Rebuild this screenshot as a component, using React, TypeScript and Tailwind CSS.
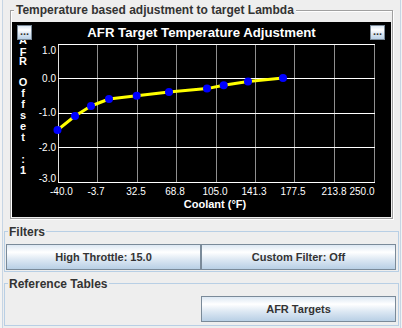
import React from "react";

const FONT = { fontFamily: '"Liberation Sans", Arial, sans-serif' };
const SVG_FONT = "'Liberation Sans', Arial, sans-serif";

function DotsButton({ className }: { className: string }) {
  return (
    <div
      className={`absolute w-[15px] h-[15px] border border-[#7a8a99] bg-[linear-gradient(to_bottom,#dde8f3_0%,#ffffff_30%,#dde8f3_60%,#b8cfe5_100%)] overflow-hidden ${className}`}
    >
      <span className="absolute left-[2px] top-[-1px] text-[11px] leading-[13px] font-bold text-[#333333]">
        ...
      </span>
    </div>
  );
}

function Btn({ children }: { children: React.ReactNode }) {
  return (
    <div className="h-[26px] flex items-center justify-center border border-[#7a8a99] bg-[linear-gradient(to_bottom,#dde8f3_0%,#ffffff_30%,#dde8f3_60%,#b8cfe5_100%)] text-[11px] leading-[13px] font-bold text-[#333333]">
      {children}
    </div>
  );
}

const gx = [46, 85, 125, 164, 204, 243, 282, 322, 362];
const gy = [22, 56, 91, 125, 160];
const pts: [number, number][] = [
  [45.5, 108],
  [63, 94],
  [79, 84],
  [97, 77],
  [124.7, 73.7],
  [157, 70],
  [195, 66.6],
  [211.7, 63.2],
  [236, 59.6],
  [271, 56],
];
const yLabels: [string, number][] = [
  ["1.0", 32],
  ["0.0", 60],
  ["-1.0", 94],
  ["-2.0", 129],
  ["-3.0", 160],
];
const xLabels = ["-40.0", "-3.7", "32.5", "68.8", "105.0", "141.3", "177.5", "213.8", "250.0"];
const vChars: [string, number][] = [
  ["A", 21.5],
  ["F", 34],
  ["R", 43],
  ["O", 64],
  ["f", 75],
  ["f", 85.5],
  ["s", 97],
  ["e", 108],
  ["t", 119],
  [":", 141],
  ["1", 152],
];

function Chart() {
  return (
    <div className="relative w-[379px] h-[195px] bg-black">
      <svg width={379} height={195} className="absolute left-0 top-0" fontFamily={SVG_FONT}>
        {gx.map((x) => (
          <line key={`v${x}`} x1={x + 0.5} x2={x + 0.5} y1={22} y2={161} stroke="#8f8f8f" strokeWidth={1} />
        ))}
        <line x1={46.5} x2={46.5} y1={22} y2={161} stroke="#e0e0e0" strokeWidth={1} />
        {gy.map((y) => (
          <line key={`h${y}`} x1={46} x2={363} y1={y + 0.5} y2={y + 0.5} stroke="#ffffff" strokeWidth={1} />
        ))}
        <polyline
          points={pts.map(([x, y]) => `${x},${y}`).join(" ")}
          fill="none"
          stroke="#ffff00"
          strokeWidth={3}
          strokeLinejoin="round"
        />
        {pts.map(([x, y], i) => (
          <circle key={i} cx={x} cy={y} r={4} fill="#0000ff" />
        ))}
        <text x={189.5} y={15} textAnchor="middle" fill="#ffffff" fontSize={13.2} fontWeight="bold">
          AFR Target Temperature Adjustment
        </text>
        {yLabels.map(([t, y]) => (
          <text key={t} x={44} y={y} textAnchor="end" fill="#ffffff" fontSize={10}>
            {t}
          </text>
        ))}
        {xLabels.map((t, i) => {
          if (i === 0)
            return (
              <text key={t} x={38} y={173} textAnchor="start" fill="#ffffff" fontSize={10}>
                {t}
              </text>
            );
          if (i === xLabels.length - 1)
            return (
              <text key={t} x={362.5} y={173} textAnchor="end" fill="#ffffff" fontSize={10}>
                {t}
              </text>
            );
          return (
            <text key={t} x={i === 7 ? gx[i] : gx[i] - 1} y={173} textAnchor="middle" fill="#ffffff" fontSize={10}>
              {t}
            </text>
          );
        })}
        <text x={203} y={186} textAnchor="middle" fill="#ffffff" fontSize={11} fontWeight="bold">
          Coolant (°F)
        </text>
        <text fill="#ffffff" fontSize={11} fontWeight="bold" textAnchor="middle">
          {vChars.map(([c, y], i) => (
            <tspan key={i} x={11} y={y}>
              {c}
            </tspan>
          ))}
        </text>
      </svg>
      <DotsButton className="left-[5px] top-[3px]" />
      <DotsButton className="left-[358px] top-[3px]" />
    </div>
  );
}

export default function App() {
  return (
    <div className="w-[402px] h-[328px] bg-[#f3f3f3] pl-[2px] pr-[1px] overflow-hidden" style={FONT}>
      <div className="h-full border-x border-[#c6d5e4] bg-[#eeeeee] flex flex-col">
        <div className="relative mt-[10px] ml-[7px] w-[383px] h-[209px] shrink-0 border border-[#a0a0a0] shadow-[inset_1px_1px_0_#ffffff,1px_1px_0_#ffffff] pt-[11px] pl-[1px]">
          <span className="absolute left-[3px] top-[-8px] px-[2px] bg-[#eeeeee] text-[12px] leading-[14px] font-bold text-[#333333] whitespace-nowrap">
            Temperature based adjustment to target Lambda
          </span>
          <Chart />
        </div>

        <div className="relative mt-[12px] mx-[1px] h-[41px] shrink-0 border border-[#b8cfe5] pt-[12px] pl-[1px]">
          <span className="absolute left-[3px] top-[-7px] px-[1px] bg-[#eeeeee] text-[12px] leading-[14px] font-bold text-[#333333]">
            Filters
          </span>
          <div className="grid grid-cols-[195px_195px]">
            <Btn>High Throttle: 15.0</Btn>
            <Btn>Custom Filter: Off</Btn>
          </div>
        </div>

        <div className="relative mt-[11px] mx-[1px] h-[43px] shrink-0 border border-[#b8cfe5] pt-[12px] pl-[1px]">
          <span className="absolute left-[3px] top-[-7px] px-[1px] bg-[#eeeeee] text-[12px] leading-[14px] font-bold text-[#333333]">
            Reference Tables
          </span>
          <div className="grid grid-cols-[195px_195px]">
            <div />
            <Btn>AFR Targets</Btn>
          </div>
        </div>
      </div>
    </div>
  );
}
